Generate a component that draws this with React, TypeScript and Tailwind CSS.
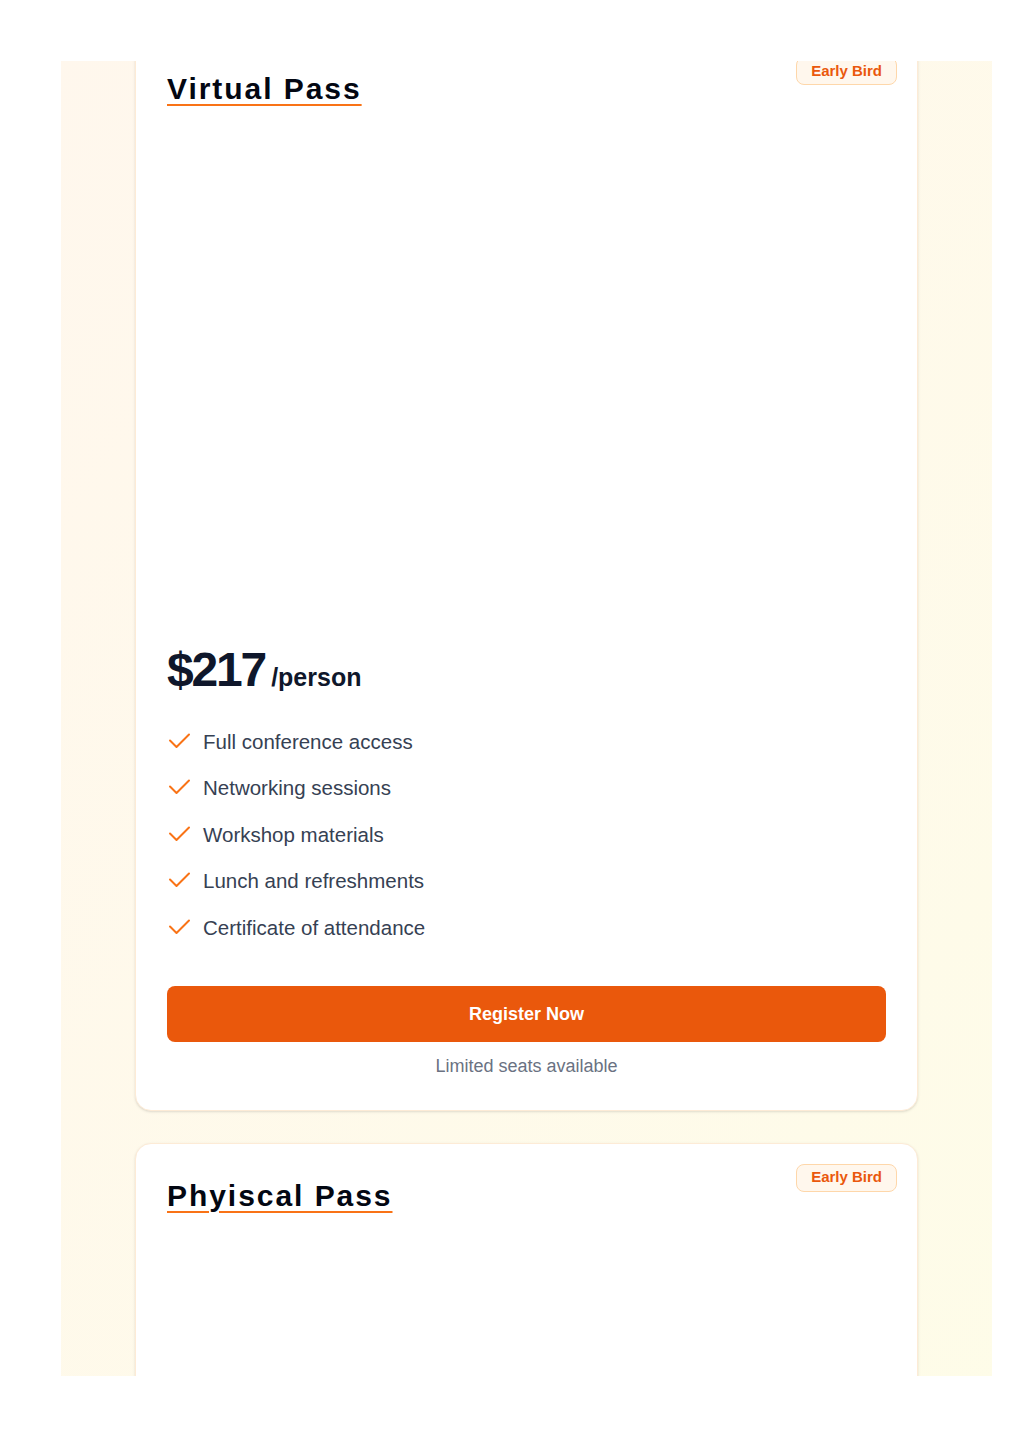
const features = [
  "Full conference access",
  "Networking sessions",
  "Workshop materials",
  "Lunch and refreshments",
  "Certificate of attendance",
];

const CheckMark = () => (
  <svg
    width="24"
    height="24"
    viewBox="0 0 24 24"
    fill="none"
    stroke="currentColor"
    strokeWidth="2"
    strokeLinecap="round"
    strokeLinejoin="round"
    className="shrink-0 text-[#f97316]"
  >
    <path d="M3 10.5 9.5 17 22 4.5" />
  </svg>
);

const PassCard = ({ title, price }: { title: string; price: string }) => {
  return (
    <div className="relative rounded-2xl border border-[#fdebd6] bg-white px-[31px] pt-[34px] pb-[30px] shadow-sm">
      <span className="absolute top-5 right-5 flex h-7 items-center rounded-lg border border-[#fed7aa] bg-[#fff7ed] px-3.5 text-[15px] font-bold text-[#ea580c]">
        Early Bird
      </span>
      <h2 className="text-3xl font-bold tracking-[0.065em] text-gray-950 underline decoration-[#f97316] decoration-2 underline-offset-[5px]">
        {title}
      </h2>

      {/* image area, nothing loads here */}
      <div className="mt-6 h-[491px]"></div>

      <div className="mt-6 flex items-baseline gap-[6px] text-slate-900">
        <span className="text-5xl leading-none font-bold tracking-[-0.045em]">
          {price}
        </span>
        <span className="text-[25px] font-bold">/person</span>
      </div>

      <ul className="mt-[31px] flex flex-col gap-[18.5px]">
        {features.map((f) => (
          <li key={f} className="flex items-center gap-3 text-[20.5px] leading-7 text-gray-700">
            <CheckMark />
            {f}
          </li>
        ))}
      </ul>

      <button className="mt-11 h-14 w-full rounded-lg bg-[#ea580c] text-lg font-bold text-white">
        Register Now
      </button>
      <p className="mt-2.5 text-center text-lg text-gray-500">
        Limited seats available
      </p>
    </div>
  );
};

export default function App() {
  return (
    <div className="min-h-[1449px] bg-white pt-[61px] pr-[32px] pl-[61px] font-['Liberation_Sans',Arial,sans-serif]">
      <section className="h-[1315px] overflow-hidden bg-gradient-to-br from-orange-50 to-yellow-50 px-[74px]">
        <div className="-mt-[25px] flex flex-col gap-8">
          <PassCard title="Virtual Pass" price="$217" />
          <PassCard title="Phyiscal Pass" price="$317" />
        </div>
      </section>
    </div>
  );
}
